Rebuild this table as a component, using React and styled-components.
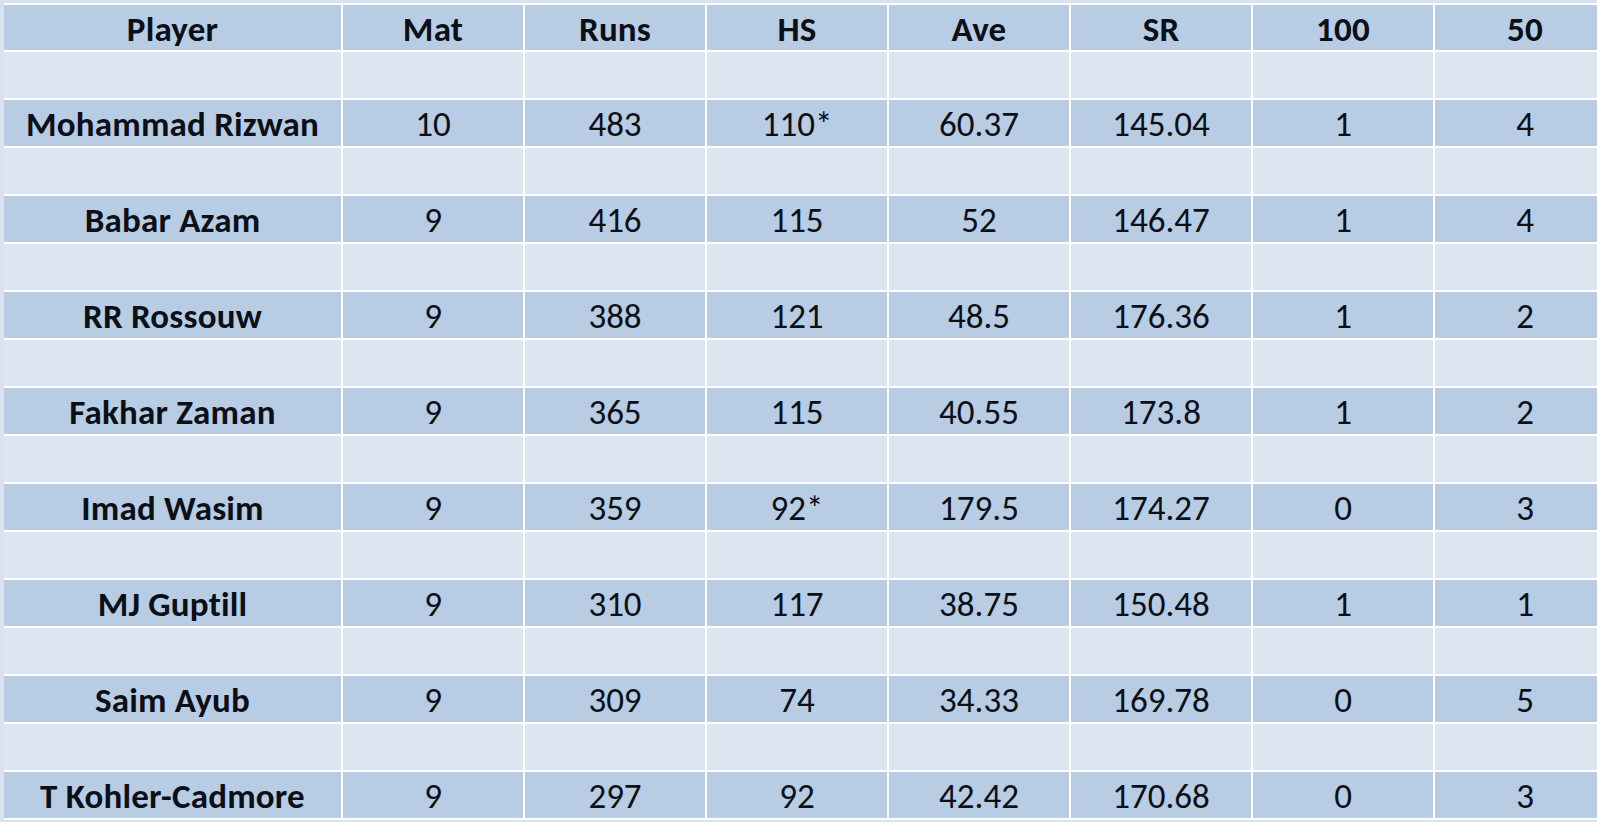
import React from "react";
import styled, { createGlobalStyle } from "styled-components";

const GlobalStyle = createGlobalStyle`
  html, body {
    margin: 0;
    padding: 0;
    background: #d9e3ef;
    overflow: hidden;
  }
`;

const Page = styled.div`
  padding: 3px 0 0 4px;
  width: 1597px;
  height: 822px;
  box-sizing: border-box;
`;

const Sheet = styled.div`
  display: grid;
  grid-template-columns: 337px repeat(7, 180px);
  grid-template-rows: 45px;
  grid-auto-rows: 46px;
  gap: 2px;
  padding: 2px 0;
  background: #ffffff;
  width: max-content;
  font-family: Carlito, Lato, "Liberation Sans", sans-serif;
  font-variant-ligatures: none;
  color: #0b0f17;
`;

const Cell = styled.div`
  display: flex;
  align-items: center;
  justify-content: center;
  padding-top: 2px;
  box-sizing: border-box;
  background: ${(props) => (props.$shade === "dark" ? "#b8cce4" : "#dce6f1")};
  font-size: 35px;
  font-weight: ${(props) => (props.$bold ? 700 : 400)};
  letter-spacing: ${(props) => (props.$bold ? "0.2px" : "0")};
  white-space: nowrap;
  overflow: hidden;
`;

const headers = ["Player", "Mat", "Runs", "HS", "Ave", "SR", "100", "50"];

const players = [
  ["Mohammad Rizwan", "10", "483", "110*", "60.37", "145.04", "1", "4"],
  ["Babar Azam", "9", "416", "115", "52", "146.47", "1", "4"],
  ["RR Rossouw", "9", "388", "121", "48.5", "176.36", "1", "2"],
  ["Fakhar Zaman", "9", "365", "115", "40.55", "173.8", "1", "2"],
  ["Imad Wasim", "9", "359", "92*", "179.5", "174.27", "0", "3"],
  ["MJ Guptill", "9", "310", "117", "38.75", "150.48", "1", "1"],
  ["Saim Ayub", "9", "309", "74", "34.33", "169.78", "0", "5"],
  ["T Kohler-Cadmore", "9", "297", "92", "42.42", "170.68", "0", "3"],
];

const App = () => (
  <Page>
    <GlobalStyle />
    <Sheet>
      {headers.map((h) => (
        <Cell key={h} $shade="dark" $bold>
          {h}
        </Cell>
      ))}
      {players.map((row) => (
        <React.Fragment key={row[0]}>
          {headers.map((h) => (
            <Cell key={"gap-" + h} $shade="light" />
          ))}
          {row.map((value, i) => (
            <Cell key={headers[i]} $shade="dark" $bold={i === 0}>
              {value}
            </Cell>
          ))}
        </React.Fragment>
      ))}
    </Sheet>
  </Page>
);

export default App;
